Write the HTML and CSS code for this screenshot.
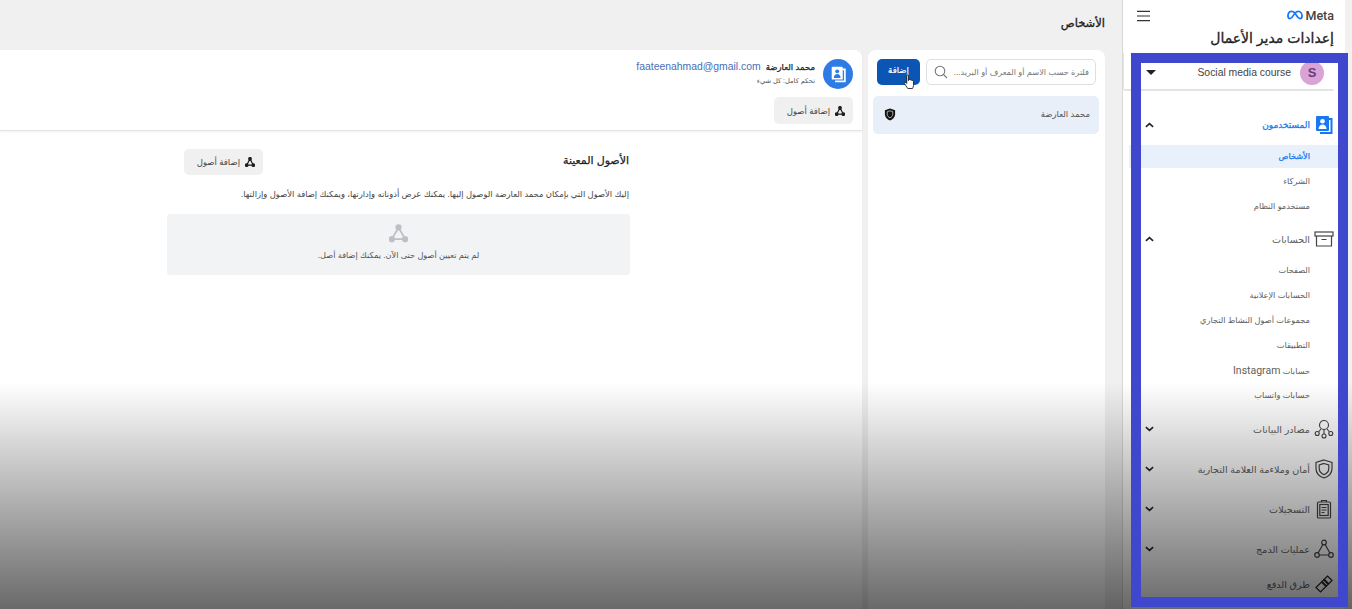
FILE: index.html
```html
<!DOCTYPE html>
<html lang="ar" dir="rtl">

<head>
  <meta charset="UTF-8" />
  <meta name="viewport" content="width=device-width, initial-scale=1.0">
  <title>إعدادات مدير الأعمال</title>
  <link rel="stylesheet" href="styles.css">
</head>

<body>
  <div class="page">
    <!-- Sidebar -->
    <aside class="sidebar">
      <div class="brand-row">
        <div class="meta-logo">
          <span class="meta-word" dir="ltr">Meta</span>
          <svg class="meta-mark" viewBox="0 0 20 12" width="16" height="10">
            <path d="M5 1.500C2.800 1.500 1.200 4 1.200 7c0 2 1 3.400 2.600 3.400C6.600 10.400 8 5.500 10 3.600c1-1 2.200-2.100 4.200-2.100 2.600 0 4.600 2.600 4.600 5.600 0 2-1 3.300-2.600 3.300C13.200 10.400 12 6 10 3.600 8.600 2 7 1.500 5 1.500z" fill="none" stroke="#1877f2" stroke-width="2.200" />
          </svg>
        </div>
        <svg class="menu-icon" viewBox="0 0 14 12" width="13" height="12">
          <path d="M0 1h14M0 6h14M0 11h14" stroke="#333" stroke-width="1.300" />
        </svg>
      </div>
      <h1 class="sidebar-title">إعدادات مدير الأعمال</h1>

      <div class="business-picker">
        <span class="business-avatar">S</span>
        <span class="business-name" dir="ltr">Social media course</span>
        <span class="caret"></span>
      </div>

      <nav class="nav">
        <div class="nav-head active">
          <svg class="nav-icon" viewBox="0 0 20 20" width="20" height="20">
            <path d="M14.500 3H18.500V19H6V17H16.500V5H14.500z" fill="#1877f2" />
            <rect x="2" y="1" width="13" height="15" rx="1" fill="#1877f2" />
            <circle cx="8.500" cy="6.300" r="2.300" fill="#fff" />
            <path d="M4.500 14c0-3 2-4.500 4-4.500s4 1.500 4 4.500z" fill="#fff" />
          </svg>
          <span class="nav-label">المستخدمون</span>
          <svg class="chevron" viewBox="0 0 10 6" width="9" height="6"><path d="M1 5l4-3.500L9 5" /></svg>
        </div>
        <div class="nav-sub nav-sub-tight">
          <a class="nav-item current">الأشخاص</a>
          <a class="nav-item">الشركاء</a>
          <a class="nav-item">مستخدمو النظام</a>
        </div>

        <div class="nav-head">
          <svg class="nav-icon" viewBox="0 0 20 20" width="20" height="20" fill="none" stroke="#444" stroke-width="1.200">
            <rect x="1" y="3" width="18" height="4" />
            <path d="M2.500 7v10h15V7M7.500 10.500h5" />
          </svg>
          <span class="nav-label">الحسابات</span>
          <svg class="chevron" viewBox="0 0 10 6" width="9" height="6"><path d="M1 5l4-3.500L9 5" /></svg>
        </div>
        <div class="nav-sub">
          <a class="nav-item">الصفحات</a>
          <a class="nav-item">الحسابات الإعلانية</a>
          <a class="nav-item">مجموعات أصول النشاط التجاري</a>
          <a class="nav-item">التطبيقات</a>
          <a class="nav-item">حسابات <span class="latin">Instagram</span></a>
          <a class="nav-item">حسابات واتساب</a>
        </div>

        <div class="nav-head">
          <svg class="nav-icon" viewBox="0 0 20 20" width="20" height="20" fill="none" stroke="#444" stroke-width="1.100">
            <circle cx="10" cy="6" r="4.500" />
            <circle cx="3.200" cy="14.500" r="2" />
            <circle cx="10" cy="17" r="2" />
            <circle cx="16.800" cy="14.500" r="2" />
            <path d="M10 10.500V15M7 10L4.500 13M13 10l2.500 3" />
          </svg>
          <span class="nav-label">مصادر البيانات</span>
          <svg class="chevron" viewBox="0 0 10 6" width="9" height="6"><path d="M1 1l4 3.500L9 1" /></svg>
        </div>
        <div class="nav-head">
          <svg class="nav-icon" viewBox="0 0 20 20" width="20" height="20" fill="none" stroke="#444" stroke-width="1.200">
            <path d="M10 1l8 2.500v6c0 4.500-3.500 8-8 9.500-4.500-1.500-8-5-8-9.500v-6z" />
            <path d="M10 4.500l4.800 1.500v3.500c0 2.800-2 5-4.800 6.200-2.800-1.200-4.800-3.400-4.800-6.200V6z" />
          </svg>
          <span class="nav-label">أمان وملاءمة العلامة التجارية</span>
          <svg class="chevron" viewBox="0 0 10 6" width="9" height="6"><path d="M1 1l4 3.500L9 1" /></svg>
        </div>
        <div class="nav-head">
          <svg class="nav-icon" viewBox="0 0 20 20" width="20" height="20" fill="none" stroke="#444" stroke-width="1.200">
            <rect x="3.500" y="3" width="13" height="16" rx="1" />
            <rect x="5.800" y="5.500" width="8.400" height="11" />
            <path d="M7.500 3V1.500h5V3M7.500 8.500h5M7.500 11h5M7.500 13.500h3" />
          </svg>
          <span class="nav-label">التسجيلات</span>
          <svg class="chevron" viewBox="0 0 10 6" width="9" height="6"><path d="M1 1l4 3.500L9 1" /></svg>
        </div>
        <div class="nav-head">
          <svg class="nav-icon" viewBox="0 0 20 20" width="20" height="20" fill="none" stroke="#444" stroke-width="1.200">
            <circle cx="10" cy="3.500" r="2.300" />
            <circle cx="3" cy="16" r="2.300" />
            <circle cx="17" cy="16" r="2.300" />
            <path d="M8.900 5.500L4.100 14M11.100 5.500L15.900 14M5.300 16h9.400" />
          </svg>
          <span class="nav-label">عمليات الدمج</span>
          <svg class="chevron" viewBox="0 0 10 6" width="9" height="6"><path d="M1 1l4 3.500L9 1" /></svg>
        </div>
        <div class="nav-head nav-head-last">
          <svg class="nav-icon" viewBox="0 0 20 20" width="20" height="20" fill="none" stroke="#222" stroke-width="1.200">
            <path d="M13.500 2l4.500 4.500L6.500 18 2 13.500z" />
            <path d="M9.700 5.300l5 5M7.500 7.500l5 5" stroke-width="2" />
          </svg>
          <span class="nav-label">طرق الدفع</span>
        </div>
      </nav>
    </aside>

    <!-- Main area -->
    <main class="main">
      <h2 class="main-title">الأشخاص</h2>
      <div class="panels">
        <section class="list-card">
          <div class="list-tools">
            <div class="search">
              <span class="search-text">فلترة حسب الاسم أو المعرف أو البريد...</span>
              <svg viewBox="0 0 14 14" width="14" height="14" fill="none" stroke="#777" stroke-width="1.100">
                <circle cx="6" cy="6" r="4.800" />
                <path d="M9.500 9.500L13 13" />
              </svg>
            </div>
            <button class="add-btn">إضافة</button>
          </div>
          <div class="person-row">
            <span class="person-name">محمد العارضة</span>
            <svg viewBox="0 0 12 14" width="12" height="13">
              <path d="M6 .5l5.500 1.800v4.500c0 3-2.300 5.400-5.500 6.700C2.800 12.200.5 9.800.5 6.800V2.300z" fill="#111" />
              <path d="M6 3l3 1v2.800c0 1.700-1.200 3-3 3.800-1.800-.8-3-2.100-3-3.800V4z" fill="#111" stroke="#ddd" stroke-width=".8" />
            </svg>
          </div>
        </section>

        <section class="detail-card">
          <header class="detail-head">
            <div class="person-top">
              <span class="person-avatar">
                <svg viewBox="0 0 20 20" width="17" height="17">
                  <path d="M14.500 3H18.500V19H6V17H16.500V5H14.500z" fill="#fff" />
                  <rect x="2" y="1" width="13" height="15" rx="1" fill="#fff" />
                  <circle cx="8.500" cy="6.300" r="2.300" fill="#2d7be5" />
                  <path d="M4.500 14c0-3 2-4.500 4-4.500s4 1.500 4 4.500z" fill="#2d7be5" />
                </svg>
              </span>
              <div class="person-info">
                <div class="person-line">
                  <strong class="person-title">محمد العارضة</strong>
                  <span class="person-email" dir="ltr">faateenahmad@gmail.com</span>
                </div>
                <div class="person-role">تحكم كامل: كل شيء</div>
              </div>
            </div>
            <div class="head-actions">
              <button class="asset-btn">
                <svg viewBox="0 0 12 12" width="10" height="10"><use href="#asset-mark" /></svg>
                إضافة أصول
              </button>
            </div>
          </header>

          <div class="assets">
            <div class="assets-top">
              <h3 class="assets-title">الأصول المعينة</h3>
              <button class="asset-btn">
                <svg viewBox="0 0 12 12" width="10" height="10"><use href="#asset-mark" /></svg>
                إضافة أصول
              </button>
            </div>
            <p class="assets-text">إليك الأصول التي بإمكان محمد العارضة الوصول إليها. يمكنك عرض أذوناته وإدارتها، ويمكنك إضافة الأصول وإزالتها.</p>
            <div class="assets-empty">
              <svg viewBox="0 0 20 20" width="19" height="19" fill="none" stroke="#bcc0c4" stroke-width="1.800">
                <circle cx="10" cy="3.500" r="2.400" fill="#bcc0c4" />
                <circle cx="3" cy="16" r="2.400" fill="#bcc0c4" />
                <circle cx="17" cy="16" r="2.400" fill="#bcc0c4" />
                <path d="M9 5.500L4 14M11 5.500L16 14M5 16h10" />
              </svg>
              <span>لم يتم تعيين أصول حتى الآن. يمكنك إضافة أصل.</span>
            </div>
          </div>
        </section>
      </div>
    </main>
  </div>

  <!-- shared icon -->
  <svg class="icon-defs" width="0" height="0">
    <defs>
      <g id="asset-mark" fill="none" stroke="#1c1e21" stroke-width="1.500">
        <circle cx="6" cy="2.200" r="1.500" fill="#1c1e21" />
        <circle cx="2" cy="9.800" r="1.500" fill="#1c1e21" />
        <circle cx="10" cy="9.800" r="1.500" fill="#1c1e21" />
        <path d="M5.500 3L2.500 9M6.500 3l3 6M2 9.800h8" />
      </g>
    </defs>
  </svg>

  <!-- hand cursor over the add button -->
  <svg class="hand-cursor" viewBox="0 0 14 18" width="13" height="17">
    <path d="M4 1.500c0-1 1.800-1 1.800 0V7l.2-1c.8-.6 1.700-.4 1.800.4.700-.6 1.700-.3 1.800.5.800-.4 1.700 0 1.700.9v4.400c0 1.400-.6 2.300-1.100 3.300H5.200L1.600 10.200c-.7-1 .5-2 1.400-1.200L4 10z" fill="#fff" stroke="#111" stroke-width=".9" />
  </svg>

  <div class="shade"></div>
  <div class="frame"></div>
</body>

</html>
```

FILE: styles.css
```css
* {
  box-sizing: border-box;
}

html,
body {
  margin: 0;
  height: 100%;
  overflow: hidden;
}

body {
  font-family: "Liberation Sans", "DejaVu Sans", sans-serif;
  background-color: #f0f0f0;
  color: #1c1e21;
}

.page {
  display: flex;
  height: 609px;
}

/* sidebar */
.sidebar {
  width: 230px;
  flex: none;
  background: #fff;
  border-left: 1px solid #d9d9d9;
  box-shadow: inset -7px 0 0 #f1f1f1;
}

.brand-row {
  display: flex;
  justify-content: space-between;
  align-items: center;
  height: 24px;
  padding: 6px 18px 0 14px;
}

.meta-logo {
  display: flex;
  align-items: center;
  gap: 2px;
}

.meta-word {
  font-family: Roboto, "Liberation Sans", sans-serif;
  font-size: 12.500px;
  font-weight: 500;
  color: #444;
}

.menu-icon {
  margin-top: 2px;
}

.sidebar-title {
  margin: 4px 18px 0 0;
  height: 25px;
  font-size: 14px;
  font-weight: 400;
  -webkit-text-stroke: .3px #222;
  line-height: 20px;
  color: #222;
}

.business-picker {
  display: flex;
  align-items: center;
  height: 38px;
  margin-right: 18px;
  padding: 9px 10px 0 0;
  border-bottom: 2px solid #e4e4e4;
  border-left: 1px solid #e4e4e4;
  border-radius: 0 0 2px 2px;
  font-size: 10.400px;
}

.business-avatar {
  width: 24px;
  height: 24px;
  border-radius: 50%;
  background: #d9a3d6;
  color: #6b3a7e;
  font-weight: 700;
  font-size: 13px;
  text-align: center;
  line-height: 24px;
  margin-top: -5px;
}

.business-name {
  margin-right: 9px;
  margin-top: -6px;
  color: #444;
  flex: 1;
  text-align: right;
}

.caret {
  width: 0;
  height: 0;
  border: 5px solid transparent;
  border-top: 5px solid #222;
  border-bottom: 0;
  margin: -6px 0 0 22px;
}

.nav {
  margin-top: 14px;
}

.nav-head {
  display: flex;
  align-items: center;
  height: 40px;
  padding: 0 18px 0 22px;
  gap: 4px;
  font-size: 9.600px;
  color: #606060;
}

.nav-head-last {
  height: 30px;
}

.nav-head.active {
  font-size: 9px;
  color: #1877f2;
  -webkit-text-stroke: .25px #1877f2;
}

.nav-icon {
  flex: none;
}

.nav-label {
  flex: 1;
}

.chevron {
  fill: none;
  stroke: #222;
  stroke-width: 1.800;
  flex: none;
}

.nav-sub {
  display: flex;
  flex-direction: column;
  gap: 2px;
  margin-bottom: 2px;
}

.nav-sub-tight {
  margin-bottom: 1px;
}

.nav-item {
  display: block;
  height: 23px;
  line-height: 23px;
  padding-right: 42px;
  font-size: 8.200px;
  color: #606060;
  text-decoration: none;
}

.nav-item .latin {
  font-family: Roboto, "Liberation Sans", sans-serif;
  font-size: 10.500px;
}

.nav-item.current {
  margin: 0 14px 0 6px;
  padding-right: 28px;
  background: #e7f0fb;
  color: #1877f2;
  -webkit-text-stroke: .25px #1877f2;
}

/* main area */
.main {
  flex: 1;
  min-width: 0;
  padding: 0 17px 0 0;
}

.main-title {
  margin: 0;
  height: 50px;
  line-height: 46px;
  font-size: 11.500px;
  font-weight: 400;
  -webkit-text-stroke: .3px #1c1e21;
  color: #1c1e21;
}

.panels {
  display: flex;
  gap: 6px;
  height: 559px;
}

.list-card {
  width: 237px;
  flex: none;
  background: #fff;
  border-radius: 8px 8px 0 0;
  padding: 9px 6px 0 5px;
}

.list-tools {
  display: flex;
  gap: 6px;
  padding: 0 3px 0 4px;
}

.search {
  flex: 1;
  display: flex;
  align-items: center;
  justify-content: space-between;
  height: 26px;
  padding: 0 6px 0 7px;
  border: 1px solid #dcdfe3;
  border-radius: 5px;
  background: #fff;
  font-size: 8.200px;
  color: #777;
}

.search-text {
  white-space: nowrap;
  overflow: hidden;
}

.add-btn {
  width: 43px;
  height: 26px;
  border: none;
  border-radius: 5px;
  padding: 0 0 4px;
  background: #0b55b5;
  color: #fff;
  font-family: inherit;
  font-size: 8.500px;
  -webkit-text-stroke: .2px #fff;
}

.person-row {
  display: flex;
  justify-content: space-between;
  align-items: center;
  height: 38px;
  margin: 11px 0 0;
  padding: 0 9px 2px 11px;
  background: #e9eff9;
  border-radius: 5px;
  font-size: 8.500px;
  color: #555;
}

.detail-card {
  flex: 1;
  min-width: 0;
  background: #fff;
  border-top-right-radius: 8px;
}

.detail-head {
  height: 81px;
  padding: 9px 9px 0;
  border-bottom: 1px solid #e4e4e4;
  box-shadow: 0 1px 2px rgba(0, 0, 0, .06);
}

.person-top {
  display: flex;
  gap: 8px;
}

.person-avatar {
  width: 30px;
  height: 30px;
  border-radius: 50%;
  background: #2d7be5;
  display: flex;
  align-items: center;
  justify-content: center;
}

.person-line {
  display: flex;
  align-items: center;
  gap: 5px;
  height: 15px;
}

.person-title {
  font-size: 8.500px;
  font-weight: 400;
  -webkit-text-stroke: .25px #1c1e21;
  color: #1c1e21;
}

.person-email {
  font-size: 10.400px;
  color: #4a6fb5;
}

.person-role {
  font-size: 6.700px;
  color: #555;
  line-height: 14px;
}

.head-actions {
  display: flex;
  margin-top: 8px;
}

.asset-btn {
  display: flex;
  align-items: center;
  gap: 5px;
  width: 79px;
  height: 27px;
  border: none;
  border-radius: 5px;
  padding: 0 8px 0 0;
  background: #f0f0f0;
  color: #444;
  font-family: inherit;
  font-size: 8.500px;
}

.assets {
  width: 463px;
  margin-right: 232px;
  padding-top: 18px;
}

.assets-top {
  display: flex;
  justify-content: space-between;
  align-items: center;
  padding-left: 17px;
}

.assets-top .asset-btn {
  height: 26px;
}

.assets-title {
  margin: 0 1px 3px 0;
  font-size: 11px;
  font-weight: 400;
  -webkit-text-stroke: .25px #1c1e21;
  color: #1c1e21;
}

.assets-text {
  margin: 12px 1px 0 0;
  height: 27px;
  line-height: 14px;
  font-size: 8.400px;
  color: #444;
  white-space: nowrap;
}

.assets-empty {
  display: flex;
  flex-direction: column;
  align-items: center;
  gap: 7px;
  height: 61px;
  padding-top: 10px;
  background: #f2f3f5;
  border-radius: 3px;
  font-size: 8.200px;
  color: #555;
}

.icon-defs {
  position: absolute;
}

/* overlays */
.hand-cursor {
  position: absolute;
  left: 903px;
  top: 74px;
}

.shade {
  position: absolute;
  left: 0;
  right: 0;
  top: 382px;
  height: 227px;
  background: linear-gradient(to bottom, rgba(0, 0, 0, 0), rgba(0, 0, 0, .59));
  pointer-events: none;
}

.frame {
  position: absolute;
  left: 1131px;
  top: 53px;
  width: 217px;
  height: 554px;
  border: 10px solid #3f47cc;
  pointer-events: none;
}
```
